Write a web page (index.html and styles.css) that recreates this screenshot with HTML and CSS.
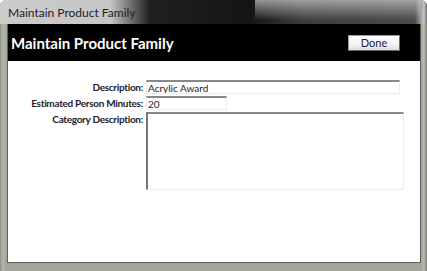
FILE: index.html
```html
<!DOCTYPE html>
<html lang="en">
<head>
  <meta charset="UTF-8">
  <meta name="viewport" content="width=device-width, initial-scale=1.0">
  <title>Maintain Product Family</title>
  <link rel="stylesheet" href="styles.css">
</head>
<body>
  <div class="window">
    <div class="titlebar">Maintain Product Family</div>

    <div class="client">
      <header>
        <h1>Maintain Product Family</h1>
        <button class="done-btn">Done</button>
      </header>

      <main class="form">
        <label for="description">Description:</label>
        <input type="text" id="description" class="field field-wide" value="Acrylic Award">

        <label for="minutes">Estimated Person Minutes:</label>
        <input type="text" id="minutes" class="field field-short" value="20">

        <label for="category">Category Description:</label>
        <textarea id="category" class="field field-area"></textarea>
      </main>
    </div>
  </div>
</body>
</html>
```

FILE: styles.css
```css
* {
  box-sizing: border-box;
}

body {
  margin: 0;
  background: #fff;
  font-family: Lato, 'Open Sans', sans-serif;
}

/* Window chrome */
.window {
  width: 427px;
  height: 271px;
  display: flex;
  flex-direction: column;
  padding: 0 6px 8px 7px;
  background: linear-gradient(to right, #8f9287, #b4b7ab 3px, #a3a698 6px, #a3a698 421px, #b8bbaf 424px, #7d8076);
  border-radius: 6px 6px 0 0;
}

.titlebar {
  height: 24px;
  margin: 0 -6px 0 -7px;
  padding: 5px 0 0 8px;
  font-size: 12px;
  color: #222;
  border-radius: 6px 6px 0 0;
  background:
    linear-gradient(to bottom, rgba(200,200,200,0.7), rgba(60,60,60,0) 85%) 255px 0 / 166px 100% no-repeat,
    linear-gradient(to right, #cbcbcb 0, #c6c6c6 110px, #202020 150px, #141414 250px, #3c3c3c 300px, #4a4a4a 415px, #c8c8c8 424px, #6a6a6a 427px);
}

.client {
  flex: 1;
  background: #fff;
  border: 1px solid #5d6057;
  border-top: none;
  display: flex;
  flex-direction: column;
}

header {
  background: #000;
  height: 37px;
  display: flex;
  align-items: center;
  justify-content: space-between;
  padding: 0 20px 0 3px;
}

header h1 {
  margin: 0;
  color: #fff;
  font-size: 15px;
  font-weight: 700;
}

.done-btn {
  width: 52px;
  height: 16px;
  padding: 0;
  font-family: inherit;
  font-size: 11px;
  color: #1a1a3a;
  background: linear-gradient(#fff, #f4f4f4 60%, #dcdcdc);
  border: 1px solid #9a9a9a;
  border-right-color: #6a6a6a;
  border-bottom-color: #6a6a6a;
  border-radius: 0;
}

/* Form */
.form {
  display: grid;
  grid-template-columns: 135px auto;
  column-gap: 3px;
  row-gap: 2px;
  padding-top: 19px;
  align-items: start;
}

.form label {
  text-align: right;
  font-size: 10px;
  font-weight: 700;
  letter-spacing: -0.3px;
  color: #1c1c2c;
  line-height: 14px;
}

.field {
  font-family: inherit;
  font-size: 10px;
  color: #1c1c2c;
  padding: 0 1px;
  margin: 0;
  border: 1px solid #ececec;
  border-top: 2px solid #888;
  background: #fff;
  outline: none;
}

.field-wide {
  width: 254px;
  height: 14px;
}

.field-short {
  width: 81px;
  height: 14px;
}

.field-area {
  width: 258px;
  height: 78px;
  resize: none;
  border-left: 2px solid #777;
}
```
